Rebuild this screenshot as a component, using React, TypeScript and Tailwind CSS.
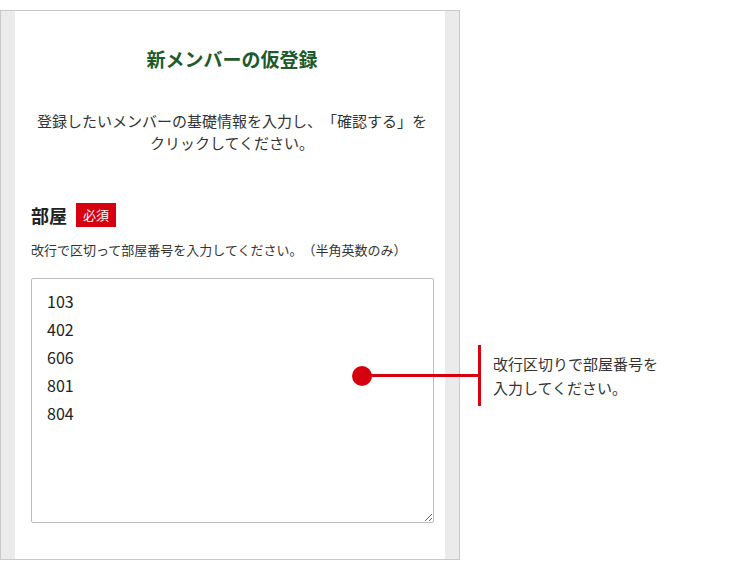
const notes = '103\n402\n606\n801\n804';

function Callout() {
  // pointer drawn over the form, text to the right of it
  return (
    <div className="absolute left-[352px] top-[345px] flex items-center">
      <span className="w-5 h-5 rounded-full bg-[#d7000f]" />
      <span className="w-[108px] h-[3px] -ml-[2px] bg-[#d7000f]" />
      <span className="w-[3px] h-[61px] bg-[#d7000f]" />
      <p className="ml-3 text-[15px] leading-6">
        改行区切りで部屋番号を
        <br />
        入力してください。
      </p>
    </div>
  );
}

export default function App() {
  return (
    <div className="relative w-[750px] h-[570px] bg-white text-[#333] font-['Noto_Sans_CJK_JP',sans-serif] [text-spacing-trim:space-all]">
      <div className="pt-[10px]">
        <div className="w-[460px] h-[550px] border border-[#c9c9c9] bg-[#ebebeb] px-[14px]">
          <div className="h-full bg-white pt-[34px] pl-4">
            <h1 className="text-center pr-3 text-[19px] leading-[27px] font-bold text-[#1d5a2c]">新メンバーの仮登録</h1>
            <p className="mt-[38px] pr-3 text-center text-[15px] leading-[22px]">
              登録したいメンバーの基礎情報を入力し、「確認する」を
              <br />
              クリックしてください。
            </p>
            <div className="mt-[49px] flex items-center gap-[9px]">
              <span className="text-[18px] leading-6 font-bold text-[#222]">部屋</span>
              <span className="bg-[#d7000f] text-white text-[13px] leading-6 px-[7px]">必須</span>
            </div>
            <p className="mt-[13px] text-[13px] leading-5">改行で区切って部屋番号を入力してください。（半角英数のみ）</p>
            <textarea
              className="mt-[18px] block w-[403px] h-[245px] border border-[#bdbdbd] rounded-[2px] pl-[15px] pt-[8px] text-[16px] leading-[28px] text-[#222] outline-none"
              defaultValue={notes}
              readOnly
            />
          </div>
        </div>
      </div>
      <Callout />
    </div>
  );
}
